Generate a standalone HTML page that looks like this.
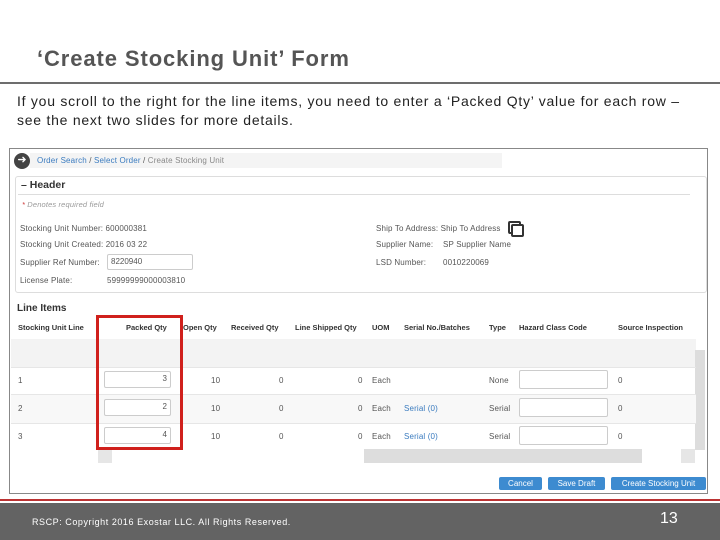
<!DOCTYPE html><html><head><style>
body{margin:0;width:720px;height:540px;background:#fff;position:relative;overflow:hidden;font-family:"Liberation Sans",sans-serif}
.a{position:absolute;white-space:nowrap}
.s{font-size:8px;color:#555;letter-spacing:0.15px}
.h{font-size:7.5px;color:#333;font-weight:bold}
.inp{position:absolute;border:1px solid #ccc;border-radius:2px;background:#fff;font-size:8px;color:#555;text-align:right;box-sizing:border-box;padding:2px 3px}
.btn{position:absolute;background:#3d8bd0;color:#fff;font-size:8px;text-align:center;border-radius:2px;line-height:13px;top:477px;height:13px}
.lnk{color:#3a7bbf}
</style></head><body>
<div class="a" style="left:37px;top:46px;font-size:22px;color:#555;font-weight:bold;letter-spacing:0.9px">‘Create Stocking Unit’ Form</div>
<div class="a" style="left:0;top:82px;width:720px;height:2px;background:#6d6d6d"></div>
<div class="a" style="left:17px;top:92px;font-size:14px;color:#222;line-height:19px;letter-spacing:0.75px">If you scroll to the right for the line items, you need to enter a ‘Packed Qty’ value for each row –<br>see the next two slides for more details.</div>
<div class="a" style="left:9px;top:148px;width:699px;height:346px;border:1px solid #888;box-sizing:border-box"></div>
<div class="a" style="left:30px;top:153px;width:472px;height:15px;background:#f4f4f4"></div>
<div class="a" style="left:14px;top:153px;width:16px;height:16px;border-radius:50%;background:#444;color:#fff;font-size:11px;text-align:center;line-height:15px">➜</div>
<div class="a s" style="left:37px;top:156px"><span class="lnk">Order Search</span> / <span class="lnk">Select Order</span> / <span style="color:#888">Create Stocking Unit</span></div>
<div class="a" style="left:15px;top:176px;width:692px;height:117px;border:1px solid #ddd;border-radius:3px;box-sizing:border-box"></div>
<div class="a" style="left:18px;top:194px;width:672px;height:1px;background:#ddd"></div>
<div class="a" style="left:21px;top:179px;font-size:10.5px;font-weight:bold;color:#333">– Header</div>
<div class="a s" style="left:22px;top:200px;font-style:italic;color:#999;font-size:7.5px"><span style="color:#c33">*</span> Denotes required field</div>
<div class="a s" style="left:20px;top:224px">Stocking Unit Number: 600000381</div>
<div class="a s" style="left:20px;top:240px">Stocking Unit Created: 2016 03 22</div>
<div class="a s" style="left:20px;top:258px">Supplier Ref Number:</div>
<div class="inp" style="left:107px;top:254px;width:86px;height:16px;text-align:left">8220940</div>
<div class="a s" style="left:20px;top:276px">License Plate:</div>
<div class="a s" style="left:107px;top:276px">59999999000003810</div>
<div class="a s" style="left:376px;top:224px">Ship To Address: Ship To Address</div>
<div class="a" style="left:508px;top:221px;width:9px;height:9px;border:2px solid #333;border-radius:2px"></div>
<div class="a" style="left:511px;top:224px;width:9px;height:9px;border:2px solid #333;border-radius:2px;background:#fff"></div>
<div class="a s" style="left:376px;top:240px">Supplier Name:</div><div class="a s" style="left:443px;top:240px">SP Supplier Name</div>
<div class="a s" style="left:376px;top:258px">LSD Number:</div><div class="a s" style="left:443px;top:258px">0010220069</div>
<div class="a" style="left:17px;top:303px;font-size:10px;font-weight:bold;color:#333">Line Items</div>
<div class="a h" style="left:18px;top:323px">Stocking Unit Line</div>
<div class="a h" style="left:126px;top:323px">Packed Qty</div>
<div class="a h" style="left:183px;top:323px">Open Qty</div>
<div class="a h" style="left:231px;top:323px">Received Qty</div>
<div class="a h" style="left:295px;top:323px">Line Shipped Qty</div>
<div class="a h" style="left:372px;top:323px">UOM</div>
<div class="a h" style="left:404px;top:323px">Serial No./Batches</div>
<div class="a h" style="left:489px;top:323px">Type</div>
<div class="a h" style="left:519px;top:323px">Hazard Class Code</div>
<div class="a h" style="left:618px;top:323px">Source Inspection</div>
<div class="a" style="left:11px;top:339px;width:685px;height:28px;background:#f3f3f3"></div>
<div class="a" style="left:695px;top:350px;width:10px;height:100px;background:#ddd"></div>
<div class="a" style="left:11px;top:394px;width:685px;height:28px;background:#f8f8f8;border-top:1px solid #e6e6e6;border-bottom:1px solid #e6e6e6"></div>
<div class="a" style="left:11px;top:367px;width:685px;height:1px;background:#e6e6e6"></div>
<div class="a s" style="left:18px;top:376px">1</div><div class="inp" style="left:104px;top:371px;width:67px;height:17px">3</div>
<div class="a s" style="left:211px;top:376px">10</div><div class="a s" style="left:279px;top:376px">0</div><div class="a s" style="left:358px;top:376px">0</div><div class="a s" style="left:372px;top:376px">Each</div><div class="a s" style="left:489px;top:376px">None</div><div class="inp" style="left:519px;top:370px;width:89px;height:19px"></div><div class="a s" style="left:618px;top:376px">0</div>
<div class="a s" style="left:18px;top:404px">2</div><div class="inp" style="left:104px;top:399px;width:67px;height:17px">2</div>
<div class="a s" style="left:211px;top:404px">10</div><div class="a s" style="left:279px;top:404px">0</div><div class="a s" style="left:358px;top:404px">0</div><div class="a s" style="left:372px;top:404px">Each</div><div class="a s lnk" style="left:404px;top:404px">Serial (0)</div><div class="a s" style="left:489px;top:404px">Serial</div><div class="inp" style="left:519px;top:398px;width:89px;height:19px"></div><div class="a s" style="left:618px;top:404px">0</div>
<div class="a s" style="left:18px;top:432px">3</div><div class="inp" style="left:104px;top:427px;width:67px;height:17px">4</div>
<div class="a s" style="left:211px;top:432px">10</div><div class="a s" style="left:279px;top:432px">0</div><div class="a s" style="left:358px;top:432px">0</div><div class="a s" style="left:372px;top:432px">Each</div><div class="a s lnk" style="left:404px;top:432px">Serial (0)</div><div class="a s" style="left:489px;top:432px">Serial</div><div class="inp" style="left:519px;top:426px;width:89px;height:19px"></div><div class="a s" style="left:618px;top:432px">0</div>
<div class="a" style="left:98px;top:449px;width:14px;height:14px;background:#e6e6e6"></div>
<div class="a" style="left:364px;top:449px;width:278px;height:14px;background:#ddd"></div>
<div class="a" style="left:681px;top:449px;width:14px;height:14px;background:#e6e6e6"></div>
<div class="a" style="left:96px;top:315px;width:87px;height:135px;border:3px solid #d0201c;box-sizing:border-box"></div>
<div class="btn" style="left:499px;width:43px">Cancel</div>
<div class="btn" style="left:548px;width:57px">Save Draft</div>
<div class="btn" style="left:611px;width:95px">Create Stocking Unit</div>
<div class="a" style="left:0;top:499px;width:720px;height:2px;background:#b33"></div>
<div class="a" style="left:0;top:503px;width:720px;height:37px;background:#636363"></div>
<div class="a" style="left:32px;top:517px;font-size:9px;color:#fff;letter-spacing:0.55px">RSCP: Copyright 2016 Exostar LLC. All Rights Reserved.</div>
<div class="a" style="left:660px;top:510px;font-size:16px;color:#fff">13</div>
</body></html>
